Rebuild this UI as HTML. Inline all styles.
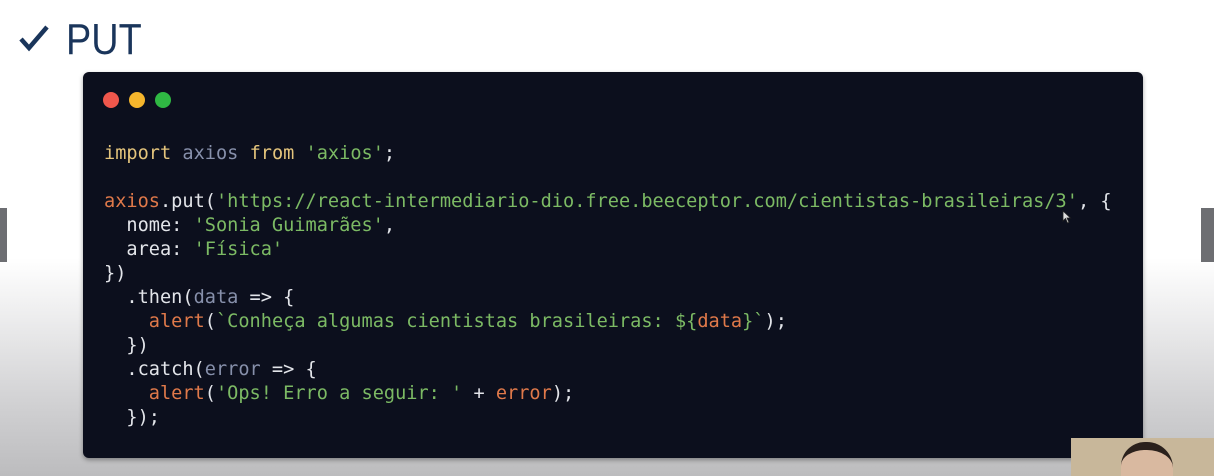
<!DOCTYPE html>
<html><head><meta charset="utf-8"><style>
html,body{margin:0;padding:0;width:1214px;height:476px;overflow:hidden}
body{position:relative;
background:linear-gradient(to bottom,#fff 0,#fff 258px,#ececed 320px,#cfcfd1 410px,#bcbcbe 476px);
font-family:"Liberation Sans",sans-serif}
.title{position:absolute;left:66px;top:14px;color:#1a355b;font-size:44px;line-height:52px;transform:scaleX(0.86);transform-origin:left top}
.barl{position:absolute;left:0;top:208px;width:7px;height:54px;background:#6d6e72}
.barr{position:absolute;left:1201px;top:208px;width:13px;height:54px;background:#6d6e72}
.card{position:absolute;left:83px;top:72px;width:1060px;height:386px;background:#0c0f1d;border-radius:6px;box-shadow:0 2px 5px rgba(0,0,0,.35)}
.dot{position:absolute;top:20px;width:16px;height:16px;border-radius:50%}
pre{position:absolute;left:21px;top:70px;margin:0;font-family:"DejaVu Sans Mono","Liberation Mono",monospace;font-size:18.6px;line-height:24px;color:#e3e5ea}
.k{color:#e4c47c}.v{color:#8790ab}.s{color:#7cba64}.o{color:#e0794a}
.cam{position:absolute;left:1071px;top:438px;width:143px;height:38px;background:#c8b79a;overflow:hidden}
.head{position:absolute;left:50px;top:4px;width:52px;height:26px;border-radius:24px 26px 0 0;background:#d9b9a0;border-top:8px solid #2b211c}
</style></head><body>
<svg style="position:absolute;left:18px;top:24px" width="32" height="28" viewBox="0 0 32 28"><path d="M3 15 L11 24 L29 3" fill="none" stroke="#1a355b" stroke-width="4.5" stroke-linejoin="miter"/></svg>
<div class="title">PUT</div>
<div class="barl"></div><div class="barr"></div>
<div class="card">
<div class="dot" style="left:20px;background:#f0574c"></div>
<div class="dot" style="left:46px;background:#f5b52c"></div>
<div class="dot" style="left:72px;background:#2fb843"></div>
<pre><span class="k">import</span> <span class="v">axios</span> <span class="k">from</span> <span class="s">'axios'</span>;

<span class="o">axios</span>.put(<span class="s">'https://react-intermediario-dio.free.beeceptor.com/cientistas-brasileiras/3'</span>, {
  nome: <span class="s">'Sonia Guimarães'</span>,
  area: <span class="s">'Física'</span>
})
  .then(<span class="v">data</span> =&gt; {
    <span class="o">alert</span>(<span class="s">`Conheça algumas cientistas brasileiras: ${</span><span class="o">data</span><span class="s">}`</span>);
  })
  .catch(<span class="v">error</span> =&gt; {
    <span class="o">alert</span>(<span class="s">'Ops! Erro a seguir: '</span> + <span class="o">error</span>);
  });</pre>
<svg style="position:absolute;left:979px;top:138px" width="10" height="14" viewBox="0 0 10 14"><path d="M1 1 L1 11 L3.5 8.5 L5.5 13 L7 12.3 L5 8 L8.5 8 Z" fill="#ddd" stroke="#222" stroke-width="0.8"/></svg>
</div>
<div class="cam"><div class="head"></div></div>
</body></html>
